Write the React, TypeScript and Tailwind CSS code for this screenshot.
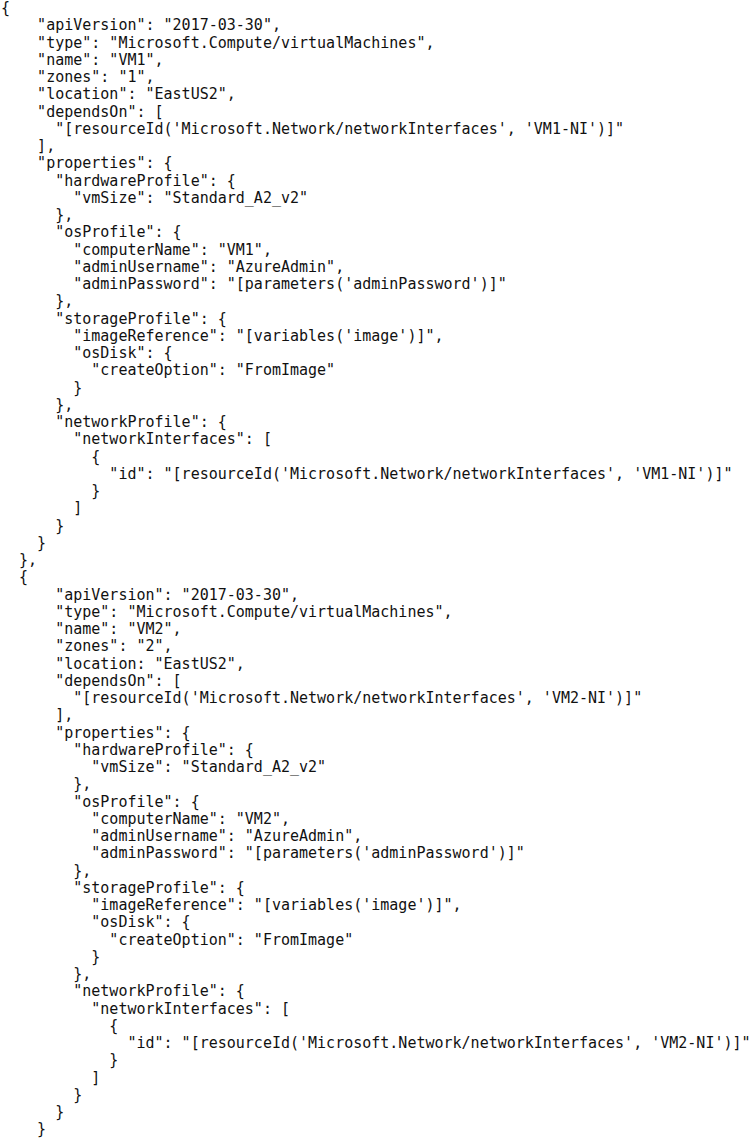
import React from 'react';

type Line = [number, string];

const lines: Line[] = [
  [0, '{'],
  [4, '"apiVersion": "2017-03-30",'],
  [4, '"type": "Microsoft.Compute/virtualMachines",'],
  [4, '"name": "VM1",'],
  [4, '"zones": "1",'],
  [4, '"location": "EastUS2",'],
  [4, '"dependsOn": ['],
  [6, '"[resourceId(\'Microsoft.Network/networkInterfaces\', \'VM1-NI\')]"'],
  [4, '],'],
  [4, '"properties": {'],
  [6, '"hardwareProfile": {'],
  [8, '"vmSize": "Standard_A2_v2"'],
  [6, '},'],
  [6, '"osProfile": {'],
  [8, '"computerName": "VM1",'],
  [8, '"adminUsername": "AzureAdmin",'],
  [8, '"adminPassword": "[parameters(\'adminPassword\')]"'],
  [6, '},'],
  [6, '"storageProfile": {'],
  [8, '"imageReference": "[variables(\'image\')]",'],
  [8, '"osDisk": {'],
  [10, '"createOption": "FromImage"'],
  [8, '}'],
  [6, '},'],
  [6, '"networkProfile": {'],
  [8, '"networkInterfaces": ['],
  [10, '{'],
  [12, '"id": "[resourceId(\'Microsoft.Network/networkInterfaces\', \'VM1-NI\')]"'],
  [10, '}'],
  [8, ']'],
  [6, '}'],
  [4, '}'],
  [2, '},'],
  [2, '{'],
  [6, '"apiVersion": "2017-03-30",'],
  [6, '"type": "Microsoft.Compute/virtualMachines",'],
  [6, '"name": "VM2",'],
  [6, '"zones": "2",'],
  [6, '"location: "EastUS2",'],
  [6, '"dependsOn": ['],
  [8, '"[resourceId(\'Microsoft.Network/networkInterfaces\', \'VM2-NI\')]"'],
  [6, '],'],
  [6, '"properties": {'],
  [8, '"hardwareProfile": {'],
  [10, '"vmSize": "Standard_A2_v2"'],
  [8, '},'],
  [8, '"osProfile": {'],
  [10, '"computerName": "VM2",'],
  [10, '"adminUsername": "AzureAdmin",'],
  [10, '"adminPassword": "[parameters(\'adminPassword\')]"'],
  [8, '},'],
  [8, '"storageProfile": {'],
  [10, '"imageReference": "[variables(\'image\')]",'],
  [10, '"osDisk": {'],
  [12, '"createOption": "FromImage"'],
  [10, '}'],
  [8, '},'],
  [8, '"networkProfile": {'],
  [10, '"networkInterfaces": ['],
  [12, '{'],
  [14, '"id": "[resourceId(\'Microsoft.Network/networkInterfaces\', \'VM2-NI\')]"'],
  [12, '}'],
  [10, ']'],
  [8, '}'],
  [6, '}'],
  [4, '}'],
];

export default function App() {
  return (
    <div className="w-[756px] h-[1138px] overflow-hidden bg-white">
      <pre className="pl-[1px] font-['DejaVu_Sans_Mono',monospace] text-[15px] leading-[17.25px] text-[#111]">
        {lines.map(([indent, text], i) => (
          <div key={i} className="whitespace-pre">
            {' '.repeat(indent) + text}
          </div>
        ))}
      </pre>
    </div>
  );
}
